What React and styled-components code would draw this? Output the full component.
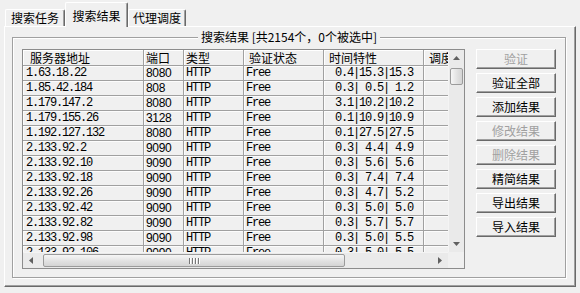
import React from 'react';
import styled, { createGlobalStyle } from 'styled-components';

const CJK = '"Noto Sans CJK SC", "Liberation Sans", sans-serif';
const MONO = '"Liberation Mono", "Noto Sans CJK SC", monospace';

const GlobalStyle = createGlobalStyle`
  html, body {
    margin: 0;
    padding: 0;
    background: #f0f0f0;
  }
  body {
    font-family: ${CJK};
    font-size: 12px;
    color: #000;
  }
`;

const Window = styled.div`
  width: 580px;
  height: 293px;
  overflow: hidden;
  background: #f0f0f0;
`;

const TabStrip = styled.div`
  display: flex;
  align-items: flex-end;
  height: 26px;
  padding-left: 5px;
  position: relative;
  z-index: 1;
`;

const Tab = styled.div`
  box-sizing: border-box;
  width: ${p => p.$w}px;
  height: ${p => (p.$active ? 25 : 17)}px;
  margin-bottom: ${p => (p.$active ? -1 : 0)}px;
  padding-top: ${p => (p.$active ? 6 : 1)}px;
  background: #f0f0f0;
  border-top: 1px solid #fff;
  border-left: 1px solid #fff;
  border-right: 1px solid #696969;
  border-radius: 2px 2px 0 0;
  box-shadow: inset -1px 0 0 #a0a0a0;
  text-align: center;
  line-height: 14px;
  white-space: nowrap;
`;

const Panel = styled.div`
  box-sizing: border-box;
  width: 572px;
  height: 261px;
  margin-left: 4px;
  padding: 3px 0 0 7px;
  border-top: 1px solid #fff;
  border-left: 1px solid #fff;
  border-right: 1px solid #696969;
  border-bottom: 1px solid #696969;
  box-shadow: inset -1px -1px 0 #a0a0a0;
`;

const Group = styled.fieldset`
  box-sizing: border-box;
  width: 554px;
  margin: 0;
  padding: 5px 9px 8px 9px;
  border: 1px solid #a0a0a0;
  box-shadow: 1px 1px 0 #fff, inset 1px 1px 0 #fff;
  min-width: 0;
`;

const Legend = styled.legend`
  margin: 0 auto;
  padding: 0 3px;
  background: #f0f0f0;
  line-height: 14px;
  font-size: 12px;
  white-space: nowrap;
`;

const GroupBody = styled.div`
  display: flex;
  align-items: flex-start;
  gap: 11px;
`;

const ListView = styled.div`
  box-sizing: border-box;
  width: 443px;
  height: 220px;
  display: grid;
  grid-template-columns: 425px 16px;
  grid-template-rows: 202px 16px;
  border: 1px solid #8c8c8c;
  background: #f0f0f0;
`;

const Viewport = styled.div`
  overflow: hidden;
`;

const Row = styled.div`
  display: flex;
  width: 470px;
  height: ${p => (p.$header ? 16 : 15)}px;
`;

const HeadCell = styled.div`
  box-sizing: border-box;
  flex: 0 0 ${p => p.$w}px;
  padding-left: ${p => p.$pad}px;
  border-right: 1px solid #a0a0a0;
  border-bottom: 1px solid #a0a0a0;
  box-shadow: inset 1px 1px 0 #fff;
  line-height: 15px;
  white-space: nowrap;
  overflow: hidden;
`;

const Cell = styled.div`
  box-sizing: border-box;
  flex: 0 0 ${p => p.$w}px;
  padding-left: ${p => p.$pad ?? 2}px;
  border-right: 1px solid #a0a0a0;
  border-bottom: 1px solid #a0a0a0;
  box-shadow: inset 1px 1px 0 #fcfcfc;
  font-family: ${p => (p.$sans ? '"Liberation Sans", sans-serif' : MONO)};
  font-size: 12px;
  letter-spacing: ${p => (p.$sans ? -0.3 : -1.2)}px;
  line-height: 14px;
  white-space: pre;
  overflow: hidden;
`;

const Filler = styled(Cell)`
  flex: 1 1 auto;
  border-right: none;
`;

const VScroll = styled.div`
  display: flex;
  flex-direction: column;
  background: #eaeaea;
  border-left: 1px solid #f4f4f4;
`;

const HScroll = styled.div`
  display: flex;
  align-items: stretch;
  background: #eaeaea;
  border-top: 1px solid #f4f4f4;
`;

const Corner = styled.div`
  background: #f0f0f0;
`;

const ArrowBtn = styled.div`
  flex: 0 0 16px;
  display: flex;
  align-items: center;
  justify-content: center;
`;

const Spacer = styled.div`
  flex: 1 1 auto;
`;

const VThumb = styled.div`
  margin: 2px 1px 0 1px;
  height: 15px;
  border: 1px solid #9b9b9b;
  border-radius: 2px;
  background: linear-gradient(to right, #f6f6f6, #e0e0e0 60%, #d4d4d4);
`;

const HThumb = styled.div`
  box-sizing: border-box;
  width: 302px;
  margin: 1px 0 1px 4px;
  border: 1px solid #9b9b9b;
  border-radius: 2px;
  background: linear-gradient(to bottom, #f6f6f6, #e0e0e0 60%, #d4d4d4);
  display: flex;
  align-items: center;
  justify-content: center;
  gap: 1px;
`;

const Grip = styled.span`
  width: 1px;
  height: 6px;
  background: #777;
  box-shadow: 1px 0 0 #fff;
  margin-right: 1px;
`;

const ButtonColumn = styled.div`
  display: flex;
  flex-direction: column;
  gap: 4px;
  width: 80px;
`;

const Button = styled.div`
  box-sizing: border-box;
  height: 20px;
  border-top: 1px solid #fff;
  border-left: 1px solid #fff;
  border-right: 1px solid #696969;
  border-bottom: 1px solid #696969;
  box-shadow: inset -1px -1px 0 #a0a0a0;
  background: #f0f0f0;
  color: ${p => (p.$disabled ? '#a0a0a0' : '#000')};
  text-align: center;
  line-height: 17px;
  font-size: 12px;
  white-space: nowrap;
`;

const Arrow = ({ dir }) => {
  const pts = {
    up: '0,4 3.5,0 7,4',
    down: '0,0 3.5,4 7,0',
    left: '4,0 0,3.5 4,7',
    right: '0,0 4,3.5 0,7'
  }[dir];
  const vertical = dir === 'up' || dir === 'down';
  return (
    <svg width={vertical ? 7 : 4} height={vertical ? 4 : 7} viewBox={vertical ? '0 0 7 4' : '0 0 4 7'}>
      <polygon points={pts} fill="#606060" />
    </svg>
  );
};

const columns = [
  { title: '服务器地址', width: 121, pad: 7 },
  { title: '端口', width: 40, pad: 2 },
  { title: '类型', width: 60, pad: 2 },
  { title: '验证状态', width: 80, pad: 5 },
  { title: '时间特性', width: 100, pad: 5 },
  { title: '调度', width: 60, pad: 5 }
];

const rows = [
  ['1.63.18.22', '8080', ' 0.4|15.3|15.3'],
  ['1.85.42.184', '808', ' 0.3| 0.5| 1.2'],
  ['1.179.147.2', '8080', ' 3.1|10.2|10.2'],
  ['1.179.155.26', '3128', ' 0.1|10.9|10.9'],
  ['1.192.127.132', '8080', ' 0.1|27.5|27.5'],
  ['2.133.92.2', '9090', ' 0.3| 4.4| 4.9'],
  ['2.133.92.10', '9090', ' 0.3| 5.6| 5.6'],
  ['2.133.92.18', '9090', ' 0.3| 7.4| 7.4'],
  ['2.133.92.26', '9090', ' 0.3| 4.7| 5.2'],
  ['2.133.92.42', '9090', ' 0.3| 5.0| 5.0'],
  ['2.133.92.82', '9090', ' 0.3| 5.7| 5.7'],
  ['2.133.92.98', '9090', ' 0.3| 5.0| 5.5'],
  ['2.133.92.106', '9090', ' 0.3| 5.0| 5.5']
];

const buttons = [
  { label: '验证', disabled: true },
  { label: '验证全部' },
  { label: '添加结果' },
  { label: '修改结果', disabled: true },
  { label: '删除结果', disabled: true },
  { label: '精简结果' },
  { label: '导出结果' },
  { label: '导入结果' }
];

const App = () => (
  <Window>
    <GlobalStyle />
    <TabStrip>
      <Tab $w={60}>搜索任务</Tab>
      <Tab $w={63} $active>搜索结果</Tab>
      <Tab $w={58}>代理调度</Tab>
    </TabStrip>
    <Panel>
      <Group>
        <Legend>搜索结果 [共2154个，0个被选中]</Legend>
        <GroupBody>
          <ListView>
            <Viewport>
              <Row $header>
                {columns.map(c => (
                  <HeadCell key={c.title} $w={c.width} $pad={c.pad}>
                    {c.title}
                  </HeadCell>
                ))}
                <Filler as={HeadCell} $w={0} />
              </Row>
              {rows.map(([ip, port, time]) => (
                <Row key={ip}>
                  <Cell $w={121} $pad={3}>{ip}</Cell>
                  <Cell $w={40} $sans>{port}</Cell>
                  <Cell $w={60}>HTTP</Cell>
                  <Cell $w={80}>Free</Cell>
                  <Cell $w={100} $pad={5}>{time}</Cell>
                  <Cell $w={60} />
                  <Filler $w={0} />
                </Row>
              ))}
            </Viewport>
            <VScroll>
              <ArrowBtn><Arrow dir="up" /></ArrowBtn>
              <VThumb />
              <Spacer />
              <ArrowBtn><Arrow dir="down" /></ArrowBtn>
            </VScroll>
            <HScroll>
              <ArrowBtn><Arrow dir="left" /></ArrowBtn>
              <HThumb>
                <Grip />
                <Grip />
                <Grip />
                <Grip />
              </HThumb>
              <Spacer />
              <ArrowBtn><Arrow dir="right" /></ArrowBtn>
            </HScroll>
            <Corner />
          </ListView>
          <ButtonColumn>
            {buttons.map(b => (
              <Button key={b.label} $disabled={b.disabled}>
                {b.label}
              </Button>
            ))}
          </ButtonColumn>
        </GroupBody>
      </Group>
    </Panel>
  </Window>
);

export default App;
